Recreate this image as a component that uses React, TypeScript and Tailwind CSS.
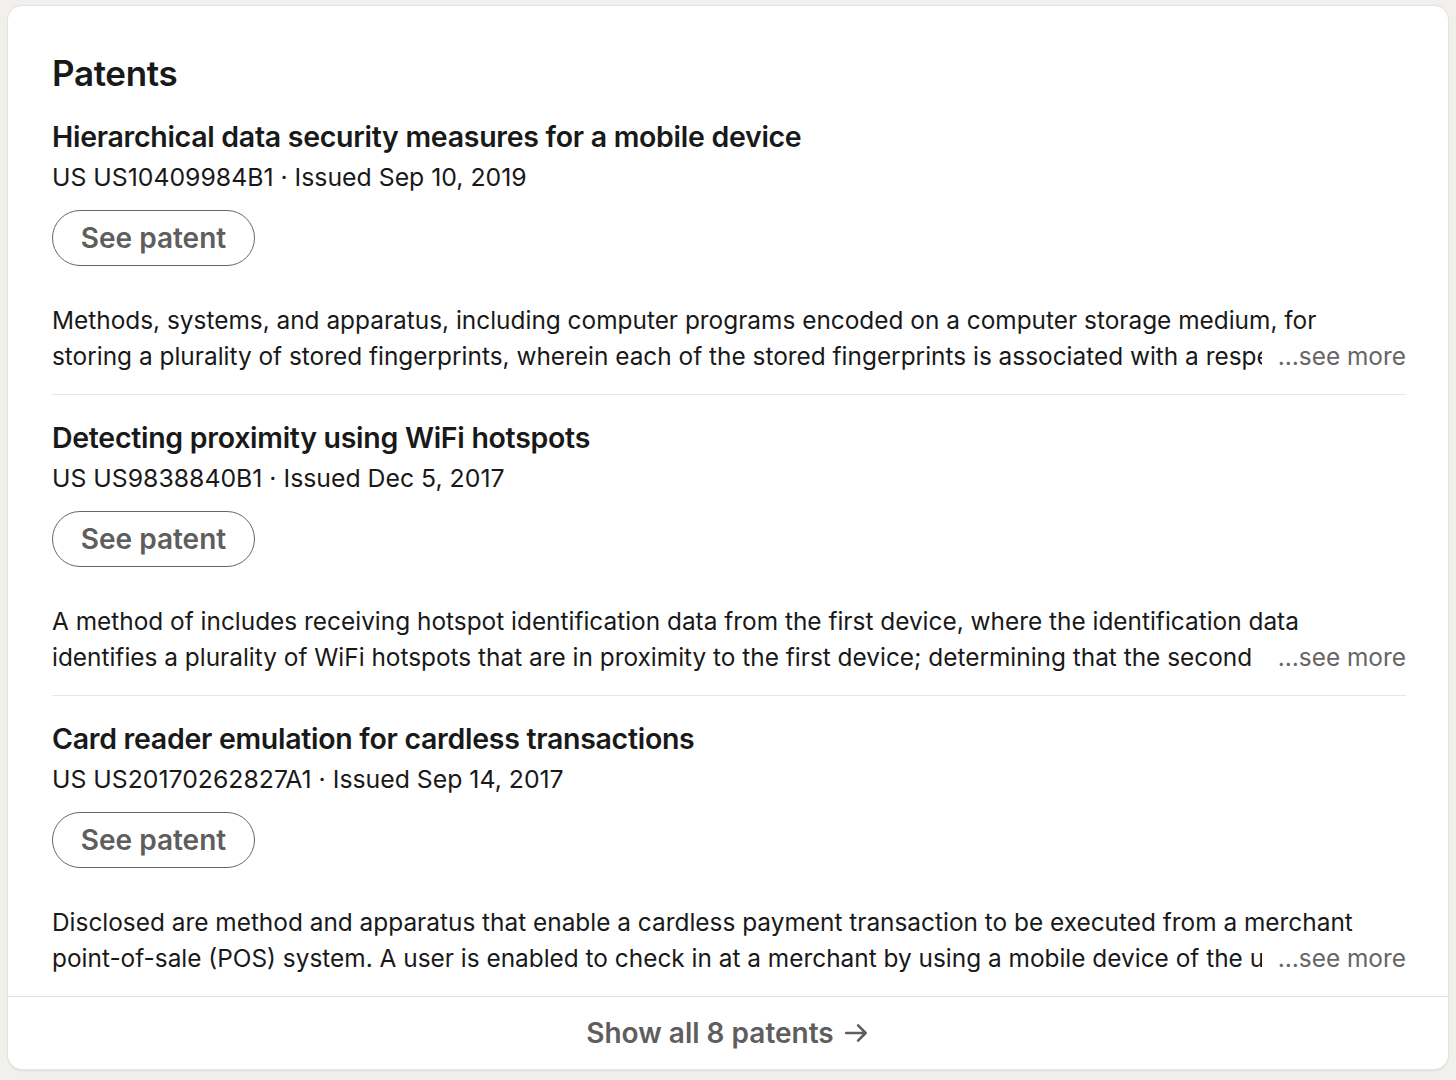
const patents = [
  {
    title: "Hierarchical data security measures for a mobile device",
    meta: "US US10409984B1 · Issued Sep 10, 2019",
    lines: [
      "Methods, systems, and apparatus, including computer programs encoded on a computer storage medium, for",
      "storing a plurality of stored fingerprints, wherein each of the stored fingerprints is associated with a respective user profile",
    ],
  },
  {
    title: "Detecting proximity using WiFi hotspots",
    meta: "US US9838840B1 · Issued Dec 5, 2017",
    lines: [
      "A method of includes receiving hotspot identification data from the first device, where the identification data",
      "identifies a plurality of WiFi hotspots that are in proximity to the first device; determining that the second",
    ],
  },
  {
    title: "Card reader emulation for cardless transactions",
    meta: "US US20170262827A1 · Issued Sep 14, 2017",
    lines: [
      "Disclosed are method and apparatus that enable a cardless payment transaction to be executed from a merchant",
      "point-of-sale (POS) system. A user is enabled to check in at a merchant by using a mobile device of the user",
    ],
  },
];

function ArrowRight() {
  return (
    <svg width="26" height="26" viewBox="0 0 24 24" fill="none" aria-hidden="true">
      <path d="M2 12h18M13 5l7 7-7 7" stroke="currentColor" strokeWidth="2.4" strokeLinecap="round" strokeLinejoin="round" />
    </svg>
  );
}

export default function App() {
  return (
    <div
      className="min-h-[1080px] bg-[#f1f0ec] px-[8px] pt-[6px] pb-[10px] text-[#191919]"
      style={{ fontFamily: "Inter, 'Liberation Sans', sans-serif" }}
    >
      <section className="overflow-hidden rounded-[14px] bg-white shadow-[0_0_0_1px_#e3e2de,0_2px_3px_rgba(0,0,0,0.08)]">
        <div className="pl-[44px] pr-[42px] pt-[47px]">
          <h2 className="text-[35px] font-semibold leading-[40px] tracking-[-0.01em]">Patents</h2>
          <ul className="mt-[24px]">
            {patents.map((p, i) => (
              <li key={p.title} className={i < patents.length - 1 ? "mb-[23px] border-b border-[#e6e6e6] pb-[20px]" : "pb-[20px]"}>
                <h3 className="text-[28.5px] font-semibold leading-[40px] tracking-[-0.01em]">{p.title}</h3>
                <p className="text-[24.8px] leading-[40px]">{p.meta}</p>
                <button className="mt-[13px] flex h-[56px] w-[203px] items-center justify-center rounded-full border-[1.5px] border-[#666666] text-[28px] font-semibold text-[#5e5e5e]">
                  See patent
                </button>
                <div className="mt-[36px] text-[24.4px] leading-[36px]">
                  <div className="overflow-hidden whitespace-nowrap">{p.lines[0]}</div>
                  <div className="flex">
                    <span className="min-w-0 flex-1 overflow-hidden whitespace-nowrap">{p.lines[1]}</span>
                    <span className="shrink-0 pl-[16px] text-[#666666]">…see more</span>
                  </div>
                </div>
              </li>
            ))}
          </ul>
        </div>
        <div className="flex h-[73px] items-center justify-center gap-[10px] border-t border-[#e0e0e0] text-[28px] font-semibold text-[#5e5e5e]">
          Show all 8 patents
          <ArrowRight />
        </div>
      </section>
    </div>
  );
}
